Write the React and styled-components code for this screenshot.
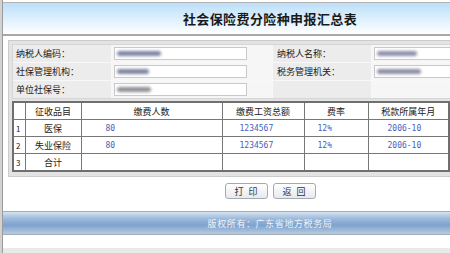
import styled, { createGlobalStyle } from "styled-components";

const GlobalStyle = createGlobalStyle`
  html, body {
    margin: 0;
    padding: 0;
    background: #ffffff;
    overflow: hidden;
  }
  body {
    font-family: "Noto Sans CJK SC", "DejaVu Sans", sans-serif;
  }
`;

const Viewport = styled.div`
  width: 450px;
  height: 253px;
  overflow: hidden;
  display: flex;
  background: #e9e9e9;
`;

const SideRail = styled.div`
  width: 2px;
  flex: none;
  background: #d2d2d2;
  border-right: 1px solid #9c9c9c;
`;

const Page = styled.div`
  width: 534px;
  flex: none;
  height: 246px;
  padding-top: 2px;
  background: #ffffff;
  display: flex;
  flex-direction: column;
`;

const Header = styled.div`
  height: 31px;
  border-top: 1px solid #b4b4b4;
  border-bottom: 2px solid #a8a8a8;
  background: linear-gradient(#bcdff8 0%, #d9eefc 45%, #ffffff 100%);
  display: flex;
  align-items: center;
  justify-content: center;
`;

const Title = styled.h1`
  margin: 0;
  font-size: 13px;
  font-weight: bold;
  letter-spacing: 0.4px;
  color: #1a1a1a;
`;

const Section = styled.div`
  margin: 4px 0 0 5px;
  padding: 3px 3px 4px 3px;
  background: #e3e3e3;
  border: 1px solid #cbcbcb;
  display: flex;
  flex-direction: column;
  gap: 2px;
`;

const InfoGrid = styled.div`
  display: grid;
  grid-template-columns: 98px 160px 98px 1fr;
  grid-auto-rows: 17px;
  gap: 1px;
  background: #f8f8f8;
  border: 1px solid #d6d6d6;
`;

const LabelCell = styled.div`
  background: #ececec;
  font-size: 9px;
  color: #222;
  padding-left: ${(p) => p.$pad ?? 3}px;
  display: flex;
  align-items: center;
`;

const ValueCell = styled.div`
  background: #f6f6f6;
  padding-left: 2px;
  display: flex;
  align-items: center;
`;

const TextBox = styled.div`
  width: ${(p) => p.$w || 133}px;
  height: 13px;
  background: #ffffff;
  border: 1px solid #c9c9c9;
  display: flex;
  align-items: center;
  padding-left: 2px;
  box-sizing: border-box;
`;

const Smudge = styled.span`
  display: inline-block;
  width: ${(p) => p.$w}px;
  height: 5px;
  border-radius: 3px;
  background: ${(p) => p.$c || "#8a8a9a"};
  filter: blur(1.4px);
`;

const DataTable = styled.table`
  width: 438px;
  border-collapse: collapse;
  background: #ffffff;
  border: 2px solid #6f6f6f;
  table-layout: fixed;
`;

const HeadCell = styled.th`
  height: 16px;
  padding: 0;
  font-size: 9px;
  font-weight: normal;
  color: #222;
  border: 1px solid #777;
  text-align: center;
`;

const Cell = styled.td`
  height: 16px;
  padding: 0 0 0 ${(p) => p.$pad || 0}px;
  font-size: ${(p) => (p.$num ? 8 : 9)}px;
  font-family: ${(p) =>
    p.$num ? '"DejaVu Sans Mono", monospace' : "inherit"};
  color: ${(p) => (p.$num ? "#4660bd" : "#222")};
  text-align: ${(p) => p.$align || "left"};
  border: 1px solid #777;
`;

const IndexCell = styled(Cell)`
  font-size: 8px;
  padding-left: 2px;
`;

const ButtonRow = styled.div`
  display: flex;
  justify-content: center;
  gap: 5px;
  margin-top: 6px;
`;

const Button = styled.button`
  width: 43px;
  height: 16px;
  padding: 0;
  border: 1px solid #a3aab3;
  border-radius: 3px;
  background: linear-gradient(#ffffff, #e6e9ee);
  font-family: inherit;
  font-size: 9px;
  letter-spacing: 5px;
  text-indent: 5px;
  color: #333;
`;

const Footer = styled.div`
  margin-top: 12px;
  height: 22px;
  border-top: 1px solid #a7acb2;
  border-bottom: 1px solid #a7acb2;
  background: linear-gradient(
    #d5e3f1 0%,
    #9dbadb 30%,
    #7ea3ce 60%,
    #b6cbe2 100%
  );
  display: flex;
  align-items: center;
  justify-content: center;
  font-size: 9px;
  letter-spacing: 0.6px;
  color: #eef3fa;
`;

const rows = [
  { no: 1, name: "医保", count: "80", wage: "1234567", rate: "12%", month: "2006-10" },
  { no: 2, name: "失业保险", count: "80", wage: "1234567", rate: "12%", month: "2006-10" },
  { no: 3, name: "合计", count: "", wage: "", rate: "", month: "" },
];

export default function App() {
  return (
    <>
      <GlobalStyle />
      <Viewport>
        <SideRail />
        <Page>
          <Header>
            <Title>社会保险费分险种申报汇总表</Title>
          </Header>
          <Section>
            <InfoGrid>
              <LabelCell>纳税人编码：</LabelCell>
              <ValueCell>
                <TextBox>
                  <Smudge $w={44} $c="#7f84a6" />
                </TextBox>
              </ValueCell>
              <LabelCell $pad={4}>纳税人名称：</LabelCell>
              <ValueCell>
                <TextBox $w={170}>
                  <Smudge $w={40} $c="#8d8fae" />
                </TextBox>
              </ValueCell>

              <LabelCell>社保管理机构：</LabelCell>
              <ValueCell>
                <TextBox>
                  <Smudge $w={32} $c="#7d849f" />
                </TextBox>
              </ValueCell>
              <LabelCell $pad={4}>税务管理机关：</LabelCell>
              <ValueCell>
                <TextBox $w={170}>
                  <Smudge $w={44} $c="#8a8da4" />
                </TextBox>
              </ValueCell>

              <LabelCell>单位社保号：</LabelCell>
              <ValueCell>
                <TextBox>
                  <Smudge $w={34} $c="#8f8f96" />
                </TextBox>
              </ValueCell>
              <LabelCell />
              <ValueCell />
            </InfoGrid>

            <DataTable>
              <colgroup>
                <col style={{ width: 12 }} />
                <col style={{ width: 56 }} />
                <col style={{ width: 141 }} />
                <col style={{ width: 82 }} />
                <col style={{ width: 64 }} />
                <col />
              </colgroup>
              <thead>
                <tr>
                  <HeadCell />
                  <HeadCell>征收品目</HeadCell>
                  <HeadCell>缴费人数</HeadCell>
                  <HeadCell>缴费工资总额</HeadCell>
                  <HeadCell>费率</HeadCell>
                  <HeadCell>税款所属年月</HeadCell>
                </tr>
              </thead>
              <tbody>
                {rows.map((r) => (
                  <tr key={r.no}>
                    <IndexCell>{r.no}</IndexCell>
                    <Cell $align="center">{r.name}</Cell>
                    <Cell $num $pad={24}>{r.count}</Cell>
                    <Cell $num $pad={17}>{r.wage}</Cell>
                    <Cell $num $pad={13}>{r.rate}</Cell>
                    <Cell $num $pad={19}>{r.month}</Cell>
                  </tr>
                ))}
              </tbody>
            </DataTable>
          </Section>

          <ButtonRow>
            <Button>打印</Button>
            <Button>返回</Button>
          </ButtonRow>

          <Footer>版权所有：广东省地方税务局</Footer>
        </Page>
      </Viewport>
    </>
  );
}
